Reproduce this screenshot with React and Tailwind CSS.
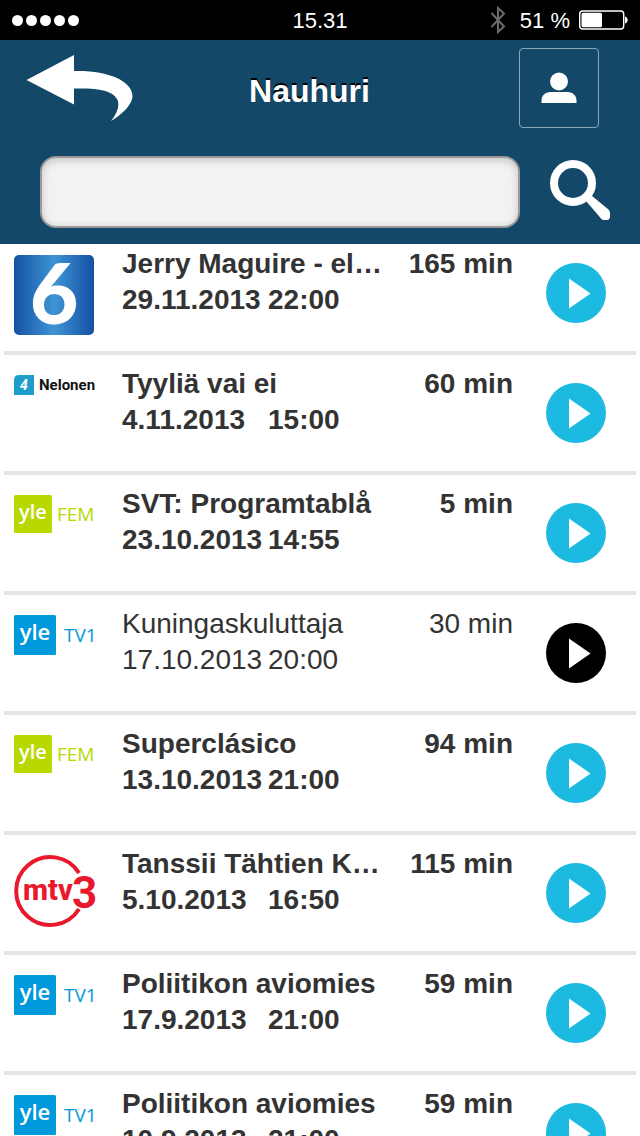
// Recorder screen: status bar, header with search, and the list of recordings.
// Unwatched recordings are bold with a blue play button, watched ones are plain with a black one.
const RECORDINGS = [
  { id: 1, channel: "kutonen", title: "Jerry Maguire - el…", date: "29.11.2013", time: "22:00", minutes: 165 },
  { id: 2, channel: "nelonen", title: "Tyyliä vai ei", date: "4.11.2013", time: "15:00", minutes: 60 },
  { id: 3, channel: "fem", title: "SVT: Programtablå", date: "23.10.2013", time: "14:55", minutes: 5 },
  { id: 4, channel: "tv1", title: "Kuningaskuluttaja", date: "17.10.2013", time: "20:00", minutes: 30, watched: true },
  { id: 5, channel: "fem", title: "Superclásico", date: "13.10.2013", time: "21:00", minutes: 94 },
  { id: 6, channel: "mtv3", title: "Tanssii Tähtien K…", date: "5.10.2013", time: "16:50", minutes: 115 },
  { id: 7, channel: "tv1", title: "Poliitikon aviomies", date: "17.9.2013", time: "21:00", minutes: 59 },
  { id: 8, channel: "tv1", title: "Poliitikon aviomies", date: "10.9.2013", time: "21:00", minutes: 59 },
];

export default function App() {
  return (
    <div className="flex h-screen flex-col overflow-hidden bg-white font-['Liberation_Sans',Arial,sans-serif] text-[#333]">
      <StatusBar />
      <Header />
      <main className="min-h-0 flex-1 overflow-hidden">
        {/* the list rests slightly scrolled under the header */}
        <ul className="-mt-[9px] px-1">
          {RECORDINGS.map((r) => (
            <RecordingRow key={r.id} recording={r} />
          ))}
        </ul>
      </main>
    </div>
  );
}

function StatusBar() {
  return (
    <div className="grid h-10 shrink-0 grid-cols-[1fr_auto_1fr] items-center bg-black px-3 text-[22px] text-white">
      <div className="flex gap-[3px]">
        {[1, 2, 3, 4, 5].map((n) => (
          <span key={n} className="size-[11px] rounded-full bg-white" />
        ))}
      </div>
      <span>15.31</span>
      <div className="flex items-center justify-end">
        <svg viewBox="0 0 16 28" className="mr-3.5 h-7 w-4" fill="none" stroke="#6b6b6b" strokeWidth="2">
          <path d="M1.5 7 14 20.5 8 26V2l6 5.5L1.5 21" />
        </svg>
        <span>51 %</span>
        <svg viewBox="0 0 50 20" className="ml-2 h-5 w-[50px]">
          <rect x="1.700" y="1" width="44" height="18" rx="3" fill="none" stroke="#fff" strokeWidth="1.4" />
          <rect x="3.500" y="2.8" width="20.5" height="14.4" rx="1.5" fill="#fff" />
          <path d="M47 6.5c3.6 1 3.6 6 0 7Z" fill="#fff" />
        </svg>
      </div>
    </div>
  );
}

function Header() {
  return (
    <header className="relative z-10 shrink-0 bg-[#144869] pt-2 pb-4 text-white">
      <div className="grid grid-cols-[1fr_auto_1fr] items-center pr-[41px] pl-5">
        <button aria-label="Takaisin" className="justify-self-start pl-1.5">
          <svg viewBox="0 0 107 68" className="h-[68px] w-[107px]" fill="#fff">
            <path d="M.5 26 48 1v16c32-1 58 9 58.500 25C106.500 50 97 60 85 67c7-9 9-17 6-22C86 36 72 34 48 34.500V50.500Z" />
          </svg>
        </button>
        <h1 className="pt-1.5 text-[32px] leading-10 font-bold [text-shadow:0_-2px_0_#000]">Nauhuri</h1>
        <button aria-label="Profiili" className="grid size-20 place-items-center justify-self-end rounded border border-[#8fa6b5]">
          <svg viewBox="0 0 36 32" className="h-8 w-9" fill="#fff">
            <circle cx="18" cy="9.500" r="9" />
            <path d="M.5 31V28.500c0-5 4-8.500 9-8.500h17c5 0 9 3.500 9 8.500V31Z" />
          </svg>
        </button>
      </div>

      <form className="mt-7 flex items-start pr-[30px] pl-10">
        <input
          type="search"
          aria-label="Haku"
          className="h-[72px] min-w-0 flex-1 appearance-none rounded-2xl border-2 border-[#999] bg-[#f2f2f2] px-4 text-[28px] text-[#333] shadow-[inset_0_2px_8px_rgba(0,0,0,0.2)] outline-none"
        />
        <button type="button" aria-label="Hae" className="ml-[30px] pt-1">
          <svg viewBox="0 0 60 60" className="size-[60px]">
            <circle cx="23" cy="23" r="19" fill="none" stroke="#fff" strokeWidth="8" />
            <path d="M36 41 42 36 58.500 49.500Q60 51 60 53V57Q59.500 60 57 60H54Q52 60 51 58.500Z" fill="#fff" />
          </svg>
        </button>
      </form>
    </header>
  );
}

function RecordingRow({ recording }) {
  const { channel, title, date, time, minutes, watched } = recording;

  return (
    <li className={`flex h-[120px] items-start border-b-4 border-[#e5e5e5] pr-[30px] pl-2.5 text-[28px] leading-9 ${watched ? "font-normal" : "font-bold"}`}>
      <div className="mr-7 w-20 shrink-0 pt-5">
        <ChannelLogo channel={channel} />
      </div>
      <div className="min-w-0 flex-1 pt-[11px]">
        <h2 className="truncate">{title}</h2>
        <p className="flex">
          <span className="w-[146px]">{date}</span>
          <span>{time}</span>
        </p>
      </div>
      <span className="w-32 shrink-0 pt-[11px] text-right">{minutes} min</span>
      <button aria-label={`Toista ${title}`} className="ml-[33px] shrink-0 pt-7">
        <svg viewBox="0 0 60 60" className={`size-[60px] ${watched ? "text-black" : "text-[#1cb9e0]"}`}>
          <circle cx="30" cy="30" r="30" fill="currentColor" />
          <path d="M23 15.500V45.500L44.500 30.500Z" fill="#fff" />
        </svg>
      </button>
    </li>
  );
}

function ChannelLogo({ channel }) {
  if (channel === "kutonen") {
    return (
      <svg viewBox="0 0 80 80" className="size-20 overflow-visible">
        <defs>
          <linearGradient id="kutonen-bg">
            <stop offset="0" stopColor="#1450a4" />
            <stop offset="0.5" stopColor="#3f95d4" />
            <stop offset="1" stopColor="#1450a4" />
          </linearGradient>
        </defs>
        <rect width="80" height="80" rx="5" fill="url(#kutonen-bg)" />
        <text x="40" y="69" textAnchor="middle" fill="#fff" className="font-['Lato',sans-serif] text-[84px] font-black">6</text>
      </svg>
    );
  }

  if (channel === "nelonen") {
    return (
      <svg viewBox="0 0 82 20" className="h-5 w-[82px] overflow-visible">
        <path d="M5 0H20V20H0V5Q0 0 5 0Z" fill="#1e9ccb" />
        <text x="10" y="15" textAnchor="middle" fill="#fff" className="font-['Roboto',sans-serif] text-[14px] font-bold italic">4</text>
        <text x="25" y="15" fill="#111" className="font-['Roboto',sans-serif] text-[15px] font-bold">Nelonen</text>
      </svg>
    );
  }

  if (channel === "mtv3") {
    return (
      <svg viewBox="0 0 84 72" className="h-[72px] w-[84px] overflow-visible" fill="#e8192c">
        <path d="M65 18A34 34 0 1 0 65 54" fill="none" stroke="#e8192c" strokeWidth="4" />
        <text x="9" y="45" className="font-['Roboto',sans-serif] text-[29px] font-extrabold">mtv</text>
        <text x="58" y="53" className="font-['Roboto',sans-serif] text-[44px] font-bold">3</text>
      </svg>
    );
  }

  if (channel === "fem") {
    return (
      <svg viewBox="0 0 84 40" className="h-10 w-[84px] overflow-visible">
        <rect width="38" height="38" rx="1.500" fill="#b8d800" />
        <text x="19" y="24" textAnchor="middle" fill="#fff" className="font-['Open_Sans',sans-serif] text-[20px] font-semibold">yle</text>
        <text x="43" y="26" fill="#b8d800" className="font-['Open_Sans',sans-serif] text-[19px] font-normal">FEM</text>
      </svg>
    );
  }

  return (
    <svg viewBox="0 0 84 40" className="h-10 w-[84px] overflow-visible">
      <rect width="42" height="40" rx="1.500" fill="#0099dc" />
      <text x="21" y="25" textAnchor="middle" fill="#fff" className="font-['Open_Sans',sans-serif] text-[22px] font-semibold">yle</text>
      <text x="50" y="27" fill="#0099dc" className="font-['Open_Sans',sans-serif] text-[19px] font-normal">TV1</text>
    </svg>
  );
}
